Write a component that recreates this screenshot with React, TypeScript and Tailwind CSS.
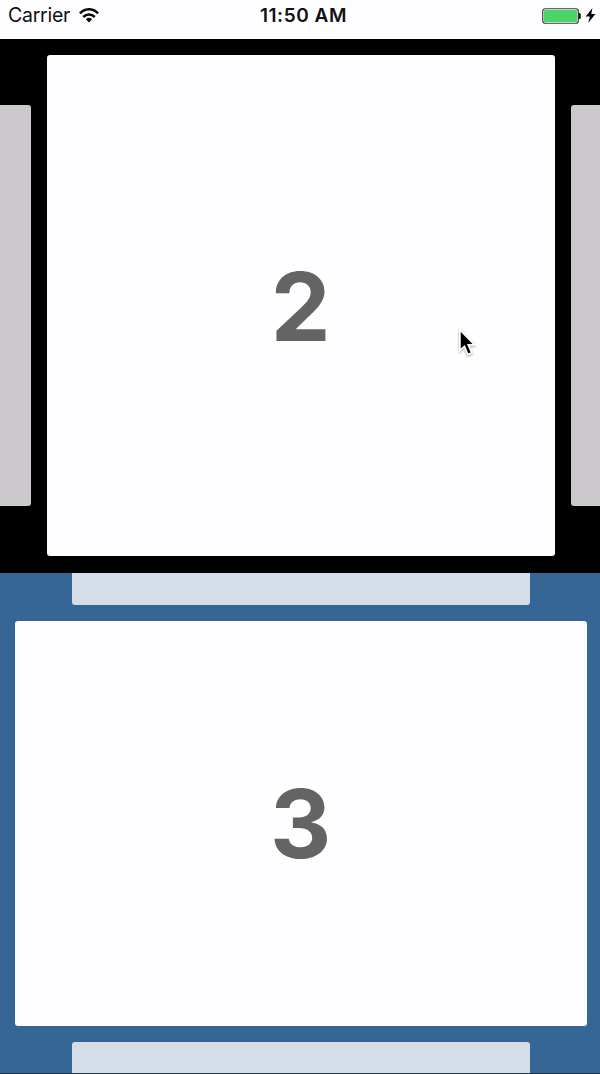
import React from "react";

function StatusBar() {
  return (
    <header className="grid h-[38.5px] shrink-0 grid-cols-3 bg-[#fefdff] px-2 text-[19.5px] leading-[31px] text-[#111]">
      <div className="flex h-[31px] items-center gap-[9px]">
        <span className="tracking-[-0.25px]">Carrier</span>
        <svg width="20" height="15" viewBox="0 0 20 15" fill="none" stroke="#0b0b0b" strokeWidth="2.6">
          <path d="M1 5.4C6-.1 14-.1 19 5.4" />
          <path d="M4.3 9C7.5 5.6 12.5 5.6 15.7 9" />
          <path d="M6.8 11.2C8.7 9.4 11.3 9.4 13.2 11.2L10 14.6Z" fill="#0b0b0b" stroke="none" />
        </svg>
      </div>
      <div className="h-[31px] whitespace-nowrap pl-[7px] text-center text-[19px] font-semibold tracking-[0.55px]">11:50 AM</div>
      <div className="-mr-1 flex h-[31px] items-center justify-end gap-1">
        <svg width="39" height="16" viewBox="0 0 40 16" preserveAspectRatio="none">
          <rect x="0.75" y="0.75" width="36.5" height="14.5" rx="2.5" fill="#fff" stroke="#39343c" strokeWidth="1.2" />
          <rect x="2" y="2" width="34" height="12" rx="1" fill="#4bd566" />
          <path d="M37.4 5h1q1.4 0 1.4 1.5v3q0 1.5-1.4 1.5h-1Z" fill="#151515" />
        </svg>
        <svg width="11" height="15" viewBox="0 0 11 15" fill="#070707">
          <path d="M7.4 0 .7 8.4H4.9L3.2 15 10.4 6H6.3Z" />
        </svg>
      </div>
    </header>
  );
}

function Slide({ value }: { value: string }) {
  return (
    <div className="flex h-full w-full items-center justify-center rounded-[3px] bg-[#fefdff] pt-px text-[95px] font-bold leading-none text-[#646464]">
      {value}
    </div>
  );
}

function Pointer() {
  return (
    <svg className="absolute left-[454px] top-[322px] drop-shadow-[0_1px_1px_rgba(0,0,0,0.35)]" width="26" height="39" viewBox="0 0 24 36">
      <path d="M5.4 7V26.3L9.6 22.5L12.8 30L16.4 28.5L13.2 21.2H19Z" fill="#000" stroke="#fff" strokeWidth="1.6" />
    </svg>
  );
}

export default function App() {
  return (
    <main className="relative flex h-[1074px] w-[600px] flex-col overflow-hidden bg-black font-['Inter',sans-serif]">
      <StatusBar />
      <section className="flex h-[534px] shrink-0 items-center justify-between bg-black">
        <div className="h-[401px] w-[30.5px] rounded-r-[3px] bg-[#cbc9cc]" />
        <div className="h-[501px] w-[508px]">
          <Slide value="2" />
        </div>
        <div className="h-[401px] w-[29px] rounded-l-[3px] bg-[#cbc9cc]" />
      </section>
      <section className="flex h-[500.5px] shrink-0 flex-col items-center justify-between bg-[#356696] pl-[1.5px]">
        <div className="h-[32px] w-[458px] rounded-b-[3px] bg-[#d5dee8]" />
        <div className="h-[404.5px] w-[572.5px]">
          <Slide value="3" />
        </div>
        <div className="h-[31px] w-[458px] rounded-t-[3px] bg-[#d5dee8]" />
      </section>
      <div className="h-px shrink-0 bg-[#203548]" />
      <Pointer />
    </main>
  );
}
